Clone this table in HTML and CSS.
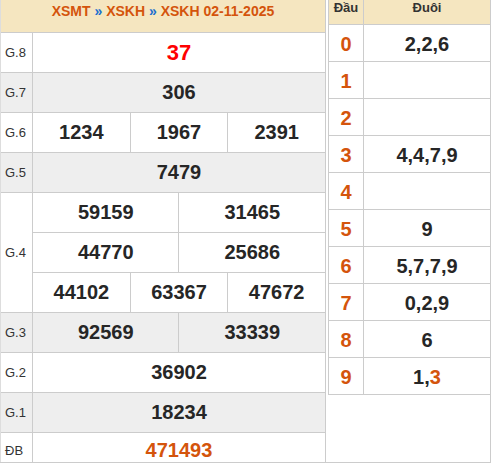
FILE: index.html
```html
<!DOCTYPE html>
<html lang="vi">
<head>
<meta charset="utf-8">
<title>XSKH 02-11-2025</title>
<link rel="stylesheet" href="styles.css">
</head>
<body>
<div class="wrap">
  <div class="results">
    <div class="title">XSMT <span class="sep">»</span> XSKH <span class="sep">»</span> XSKH 02-11-2025</div>

    <div class="lbl">G.8</div>
    <div class="num s6 red">37</div>

    <div class="lbl alt">G.7</div>
    <div class="num s6 alt">306</div>

    <div class="lbl">G.6</div>
    <div class="num s2">1234</div>
    <div class="num s2">1967</div>
    <div class="num s2">2391</div>

    <div class="lbl alt">G.5</div>
    <div class="num s6 alt">7479</div>

    <div class="lbl tall">G.4</div>
    <div class="num s3">59159</div>
    <div class="num s3">31465</div>
    <div class="num s3">44770</div>
    <div class="num s3">25686</div>
    <div class="num s2">44102</div>
    <div class="num s2">63367</div>
    <div class="num s2">47672</div>

    <div class="lbl alt">G.3</div>
    <div class="num s3 alt">92569</div>
    <div class="num s3 alt">33339</div>

    <div class="lbl">G.2</div>
    <div class="num s6">36902</div>

    <div class="lbl alt">G.1</div>
    <div class="num s6 alt">18234</div>

    <div class="lbl">ĐB</div>
    <div class="num s6 special">471493</div>
  </div>

  <div class="loto-wrap">
    <div class="loto">
      <div class="lh">Đầu</div><div class="lh tail">Đuôi</div>
      <div class="head">0</div><div class="tail">2,2,6</div>
      <div class="head">1</div><div class="tail"></div>
      <div class="head">2</div><div class="tail"></div>
      <div class="head">3</div><div class="tail">4,4,7,9</div>
      <div class="head">4</div><div class="tail"></div>
      <div class="head">5</div><div class="tail">9</div>
      <div class="head">6</div><div class="tail">5,7,7,9</div>
      <div class="head">7</div><div class="tail">0,2,9</div>
      <div class="head">8</div><div class="tail">6</div>
      <div class="head">9</div><div class="tail">1,<span class="hl">3</span></div>
    </div>
  </div>
</div>
</body>
</html>
```

FILE: styles.css
```css
* { box-sizing: border-box; }

html, body {
  margin: 0;
  padding: 0;
  background: #fff;
}

body {
  font-family: "Liberation Sans", Arial, sans-serif;
  color: #262626;
}

.wrap {
  display: flex;
  align-items: flex-start;
  width: 491px;
  height: 463px;
  border-bottom: 1px solid #cccccc;
  overflow: hidden;
}

/* ---------- results table ---------- */
.results {
  flex: 0 0 326px;
  display: grid;
  grid-template-columns: 32px repeat(6, 1fr);
  grid-template-rows: 33px repeat(10, 40px) 36px;
  border-left: 1px solid #dddddd;
}

.results > div {
  border-right: 1px solid #cccccc;
  border-bottom: 1px solid #cccccc;
}

.title {
  grid-column: 1 / -1;
  background: #f5e6c0;
  color: #d4540c;
  font-weight: bold;
  font-size: 14px;
  line-height: 20px;
  padding-top: 1px;
  text-align: center;
}

.title .sep { color: #1b6ecf; }

.lbl {
  grid-column: 1;
  display: flex;
  align-items: center;
  padding-left: 4px;
  font-size: 13px;
  color: #333333;
}

.lbl.tall { grid-row: span 3; }

.num {
  display: flex;
  align-items: center;
  justify-content: center;
  font-size: 20px;
  font-weight: bold;
  color: #262626;
}

.s6 { grid-column: span 6; }
.s3 { grid-column: span 3; }
.s2 { grid-column: span 2; }

.alt { background: #eeeeee; }

.num.red {
  color: #ff0000;
  font-size: 22px;
}

.num.special { color: #d4540c; }

/* ---------- loto table ---------- */
.loto-wrap {
  flex: 1 1 auto;
  align-self: stretch;
  padding-left: 2px;
  border-right: 1px solid #cccccc;
}

.loto {
  display: grid;
  grid-template-columns: 35px 1fr;
  grid-template-rows: 25px repeat(10, 37px);
  border-left: 1px solid #cccccc;
}

.loto > div {
  border-bottom: 1px solid #cccccc;
  display: flex;
  justify-content: center;
}

.loto > div:nth-child(odd) {
  border-right: 1px solid #cccccc;
}

.lh {
  background: #f5e6c0;
  font-size: 13px;
  font-weight: bold;
  line-height: 16px;
  color: #333333;
  align-items: flex-start;
}

.head {
  align-items: center;
  padding-top: 2px;
  font-size: 20px;
  font-weight: bold;
  color: #d4540c;
}

.tail {
  align-items: center;
  padding-top: 2px;
  font-size: 20px;
  font-weight: bold;
  color: #262626;
}

.lh.tail {
  align-items: flex-start;
  padding-top: 0;
  font-size: 13px;
  color: #333333;
}

.hl { color: #d4540c; }
```
